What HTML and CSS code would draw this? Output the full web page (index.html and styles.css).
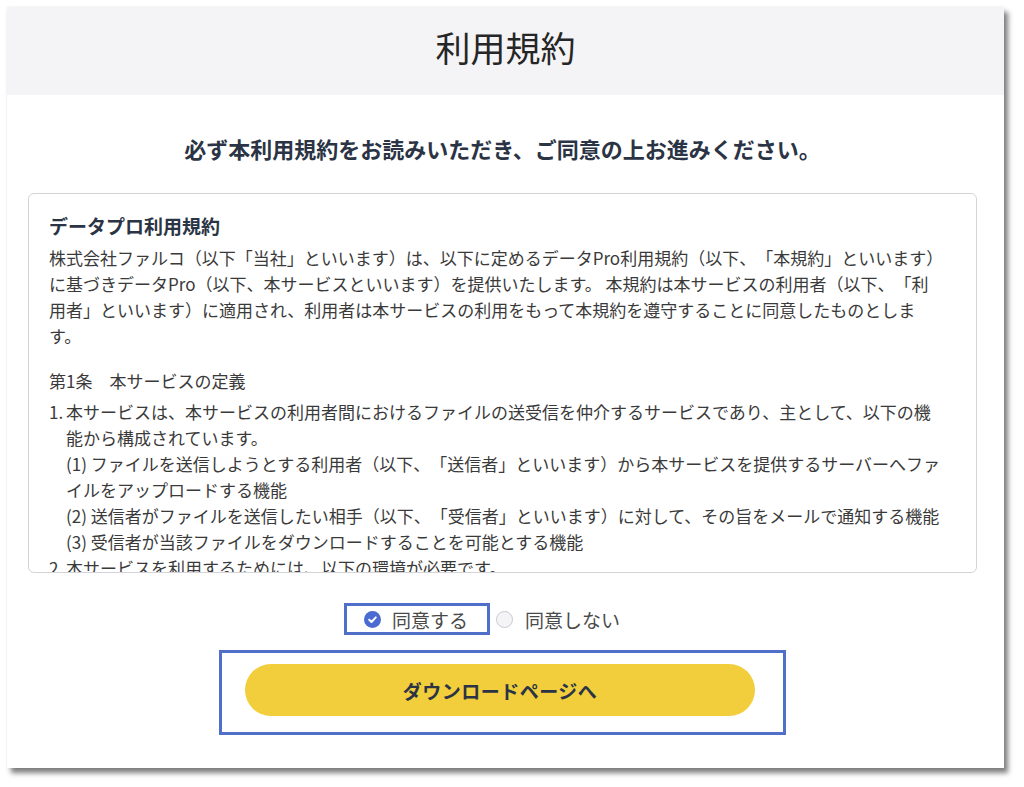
FILE: index.html
```html
<!DOCTYPE html>
<html lang="ja">

<head>
    <meta charset="UTF-8">
    <meta name="viewport" content="width=device-width, initial-scale=1.0">
    <title>利用規約</title>
    <link rel="stylesheet" href="styles.css">
</head>

<body>
    <div class="panel">
        <div class="panel-header">
            <h1>利用規約</h1>
        </div>

        <div class="panel-body">
            <p class="lead">必ず本利用規約をお読みいただき、ご同意の上お進みください。</p>

            <div class="terms">
                <h2>データプロ利用規約</h2>
                <p>株式会社ファルコ（以下「当社」といいます）は、以下に定めるデータPro利用規約（以下、「本規約」といいます）に基づきデータPro（以下、本サービスといいます）を提供いたします。 本規約は本サービスの利用者（以下、「利用者」といいます）に適用され、利用者は本サービスの利用をもって本規約を遵守することに同意したものとします。</p>

                <p class="article">第1条　本サービスの定義</p>
                <ol class="clauses">
                    <li>
                        <span class="num">1.</span>
                        <div>
                            本サービスは、本サービスの利用者間におけるファイルの送受信を仲介するサービスであり、主として、以下の機能から構成されています。
                            <div>(1) ファイルを送信しようとする利用者（以下、「送信者」といいます）から本サービスを提供するサーバーへファイルをアップロードする機能</div>
                            <div>(2) 送信者がファイルを送信したい相手（以下、「受信者」といいます）に対して、その旨をメールで通知する機能</div>
                            <div>(3) 受信者が当該ファイルをダウンロードすることを可能とする機能</div>
                        </div>
                    </li>
                    <li>
                        <span class="num">2.</span>
                        <div>本サービスを利用するためには、以下の環境が必要です。</div>
                    </li>
                    <li>
                        <span class="num">3.</span>
                        <div>利用者は、自己の責任と費用において前項の環境を整備するものとします。</div>
                    </li>
                </ol>
            </div>

            <div class="agree-row">
                <label class="choice mark">
                    <svg width="17" height="17" viewBox="0 0 17 17">
                        <circle cx="8.5" cy="8.5" r="8.5" fill="#4a6bd1" />
                        <path d="M5.2 8.8 L7.5 11 L11.8 6.4" fill="none" stroke="#fff" stroke-width="2"
                            stroke-linecap="round" stroke-linejoin="round" />
                    </svg>
                    <span>同意する</span>
                </label>
                <label class="choice">
                    <svg width="17" height="17" viewBox="0 0 17 17">
                        <circle cx="8.5" cy="8.5" r="8" fill="#f4f4f6" stroke="#c9c9ce" stroke-width="1" />
                    </svg>
                    <span>同意しない</span>
                </label>
            </div>

            <div class="btn-frame">
                <button class="btn-next">ダウンロードページへ</button>
            </div>
        </div>
    </div>
</body>

</html>
```

FILE: styles.css
```css
html,
body {
    min-height: 100%;
}

body {
    margin: 0;
    padding: 7px 0 19px 7px;
    box-sizing: border-box;
    min-height: 787px;
    background: #fff;
    font-family: "Noto Sans CJK JP", "Noto Sans", sans-serif;
    color: #3a3a3a;
    text-spacing-trim: space-all;
}

.panel {
    width: 997px;
    background: #fff;
    box-shadow: 4px 5px 5px rgba(0, 0, 0, 0.5), 0 0 2px rgba(0, 0, 0, 0.08);
}

.panel-header {
    background: #f4f4f6;
    height: 88px;
    box-sizing: border-box;
    padding-top: 15px;
    text-align: center;
}

.panel-header h1 {
    margin: 0;
    font-size: 35px;
    line-height: 50px;
    font-weight: 400;
    color: #262626;
}

.panel-body {
    padding: 0 27px 33px 21px;
}

.lead {
    margin: 37px 0 29px;
    text-align: center;
    font-size: 22px;
    line-height: 32px;
    font-weight: 700;
    color: #2b3445;
}

.terms {
    box-sizing: border-box;
    height: 380px;
    border: 1px solid #d4d4d8;
    border-radius: 6px;
    padding: 18px 32px 0 20px;
    overflow-y: auto;
    scrollbar-width: none;
    font-size: 17px;
    line-height: 26px;
}

.terms h2 {
    margin: 0 0 5px;
    font-size: 19px;
    line-height: 28px;
    font-weight: 700;
    color: #2b3445;
}

.terms p {
    margin: 0 0 19px;
}

.terms p.article {
    margin-bottom: 5px;
}

.clauses {
    list-style: none;
    margin: 0;
    padding: 0;
}

.clauses li {
    display: flex;
}

.clauses .num {
    flex: 0 0 17px;
}

.clauses li > div {
    flex: 1;
}

.agree-row {
    display: flex;
    justify-content: center;
    align-items: center;
    margin-top: 30px;
    padding-right: 41px;
}

.choice {
    display: flex;
    align-items: center;
    gap: 12px;
    height: 32px;
    font-size: 19px;
    color: #4a4a4a;
    margin-left: 6px;
}

.choice svg {
    display: block;
}

.choice.mark {
    box-sizing: border-box;
    border: 3px solid #4f6fc8;
    padding: 0 19px 0 17px;
    gap: 11px;
    margin-left: 0;
}

.btn-frame {
    width: 567px;
    box-sizing: border-box;
    margin: 15px auto 0;
    border: 3px solid #4f6fc8;
    padding: 11px 28px 16px 23px;
}

.btn-next {
    display: block;
    width: 510px;
    height: 52px;
    border: none;
    border-radius: 26px;
    background: #f2ce3c;
    font-family: inherit;
    font-size: 19px;
    font-weight: 700;
    letter-spacing: 0.5px;
    color: #2b3445;
    cursor: pointer;
}
```
